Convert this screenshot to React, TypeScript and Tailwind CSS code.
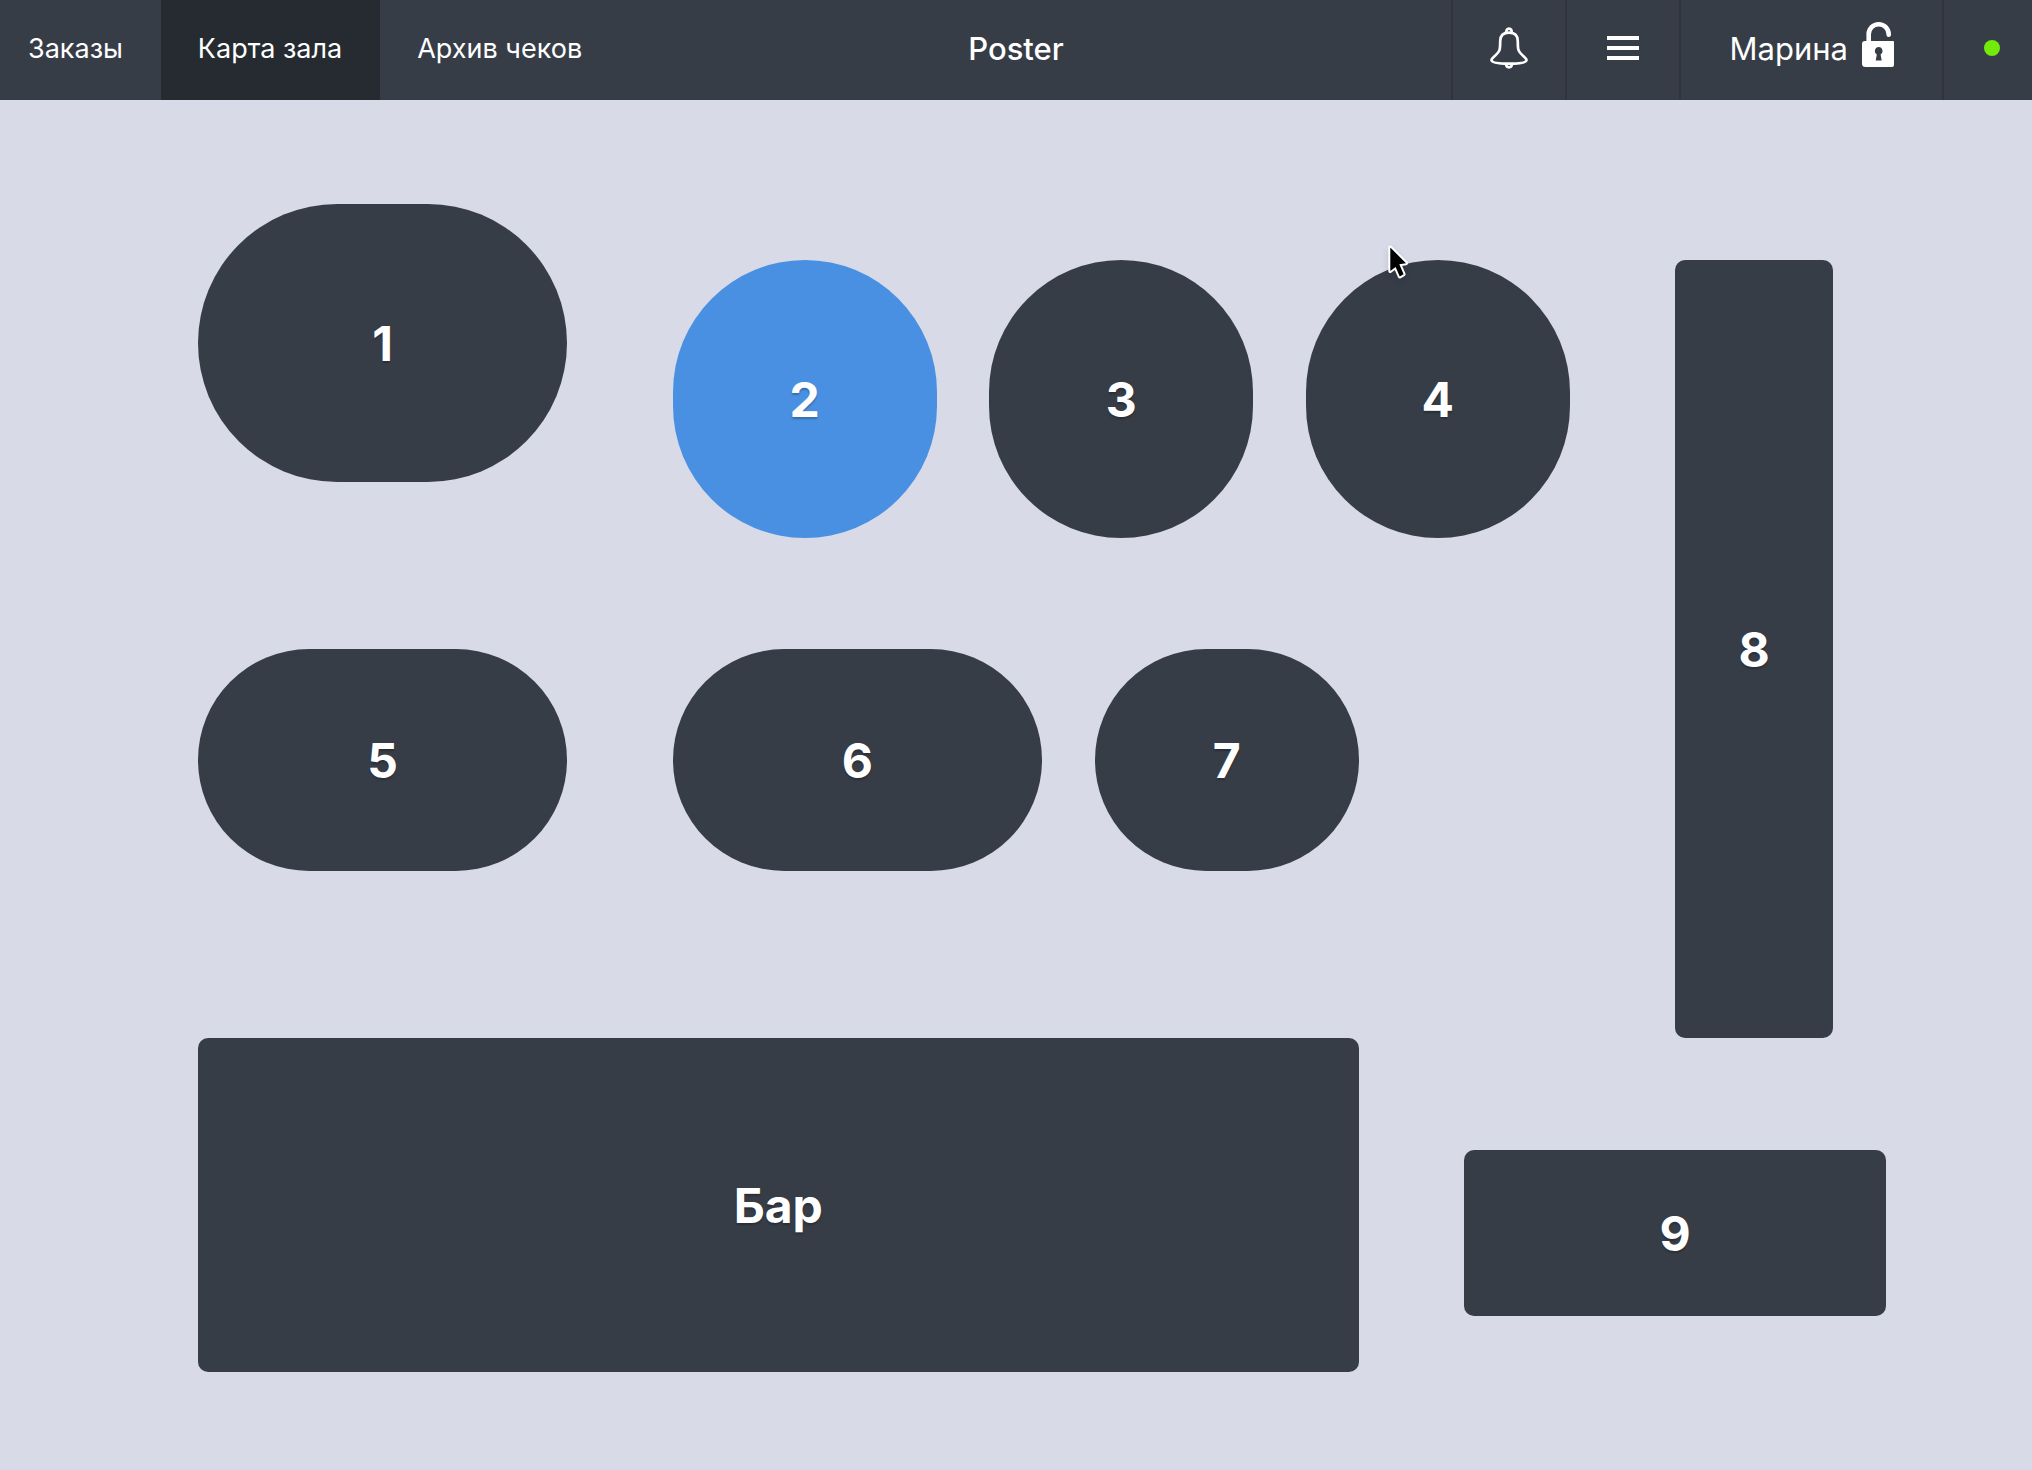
import { useState } from "react";
import clsx from "clsx";

type HallTable = {
  name: string;
  round?: boolean;
  area: string;
};

const tabs = ["Заказы", "Карта зала", "Архив чеков"];

const tables: HallTable[] = [
  { name: "1", round: true, area: "col-start-1 col-span-7 row-start-1 row-span-5" },
  { name: "2", round: true, area: "col-start-10 col-span-5 row-start-2 row-span-5" },
  { name: "3", round: true, area: "col-start-16 col-span-5 row-start-2 row-span-5" },
  { name: "4", round: true, area: "col-start-22 col-span-5 row-start-2 row-span-5" },
  { name: "5", round: true, area: "col-start-1 col-span-7 row-start-9 row-span-4" },
  { name: "6", round: true, area: "col-start-10 col-span-7 row-start-9 row-span-4" },
  { name: "7", round: true, area: "col-start-18 col-span-5 row-start-9 row-span-4" },
  { name: "8", area: "col-start-29 col-span-3 row-start-2 row-span-14" },
  { name: "Бар", area: "col-start-1 col-span-22 row-start-16 row-span-6" },
  { name: "9", area: "col-start-25 col-span-8 row-start-18 row-span-3" },
];

function BellIcon() {
  return (
    <svg width="38" height="42" viewBox="0 0 38 42" fill="none" stroke="currentColor" strokeWidth="2.7" aria-hidden="true">
      <path d="M16.4 5.4C16 3.2 17 1.6 19 1.6S22 3.2 21.6 5.4" />
      <path d="M19 5.6C13 5.6 10.2 8.6 10.2 14.2C10.2 24 9.6 24.4 5.2 28.6C3 30.5 1.5 31.6 1.5 33C1.5 35.6 9 36.7 19 36.7S36.5 35.6 36.5 33C36.5 31.6 35 30.5 32.8 28.6C28.4 24.4 27.8 24 27.8 14.2C27.8 8.6 25 5.6 19 5.6Z" />
      <path d="M16 37C16.2 39.4 17.2 40.4 19 40.4S21.8 39.4 22 37" />
    </svg>
  );
}

function MenuIcon() {
  return (
    <svg width="32" height="24" viewBox="0 0 32 24" fill="currentColor" aria-hidden="true">
      <path d="M0 0H32V4H0ZM0 10H32V14H0ZM0 20H32V24H0Z" />
    </svg>
  );
}

function UnlockIcon() {
  return (
    <svg width="32" height="45" viewBox="0 0 32 45" aria-hidden="true">
      <path d="M6.7 21V12.3A10 10 0 0 1 26.7 12.3V12.8" fill="none" stroke="currentColor" strokeWidth="4.6" strokeLinecap="round" />
      <path d="M3 19H31Q32 19 32 20V43Q32 45 30 45H3.5Q0 45 0 41.5V22Q0 19 3 19Z" fill="currentColor" />
      <path d="M16.7 25A4 4 0 0 1 18.6 32.4L19.7 38.4H13.7L14.8 32.4A4 4 0 0 1 16.7 25Z" fill="#373d47" />
    </svg>
  );
}

function Cursor() {
  return (
    <svg
      className="pointer-events-none absolute left-[1387px] top-[144px] drop-shadow-md"
      width="24"
      height="38"
      viewBox="0 0 24 38"
      aria-hidden="true"
    >
      <path
        d="M3.3 3.6L19 19.2L12.3 20.2L16.6 30.2L12.8 32.4L8.6 23L3.3 27Z"
        fill="#000"
        stroke="#fff"
        strokeWidth="4"
        strokeLinejoin="round"
        paintOrder="stroke"
      />
    </svg>
  );
}

export default function App() {
  const [tab, setTab] = useState("Карта зала");
  const [selected, setSelected] = useState("2");

  return (
    <div className="flex min-h-screen flex-col bg-[#d8dae7] font-['Inter',sans-serif] text-white">
      <header className="grid h-[100px] grid-cols-[1fr_auto_1fr] bg-[#373d47]">
        <nav className="flex">
          {tabs.map((name) => (
            <button
              key={name}
              type="button"
              onClick={() => setTab(name)}
              className={clsx(
                "whitespace-nowrap pr-[38px] pb-0.5 pl-[37px] text-[27px] leading-9 first:pl-7",
                tab === name && "bg-[#252b31]",
              )}
            >
              {name}
            </button>
          ))}
        </nav>
        <h1 className="flex items-center pb-0.5 text-[31px] leading-9 font-medium">Poster</h1>
        <div className="flex justify-end">
          <button type="button" aria-label="Уведомления" className="flex w-[114px] items-center justify-center border-l-2 border-[#2f353b] pb-1">
            <BellIcon />
          </button>
          <button type="button" aria-label="Меню" className="flex w-[114px] items-center justify-center border-l-2 border-[#2f353b] pb-1">
            <MenuIcon />
          </button>
          <button type="button" className="flex items-center border-l-2 border-[#2f353b] pr-12 pb-3 pl-[49px]">
            <span className="flex items-end gap-3.5">
              <span className="text-[31px] leading-9">Марина</span>
              <UnlockIcon />
            </span>
          </button>
          <div className="flex items-center border-l-2 border-[#2f353b] pr-8 pb-1 pl-10">
            <span role="status" aria-label="В сети" className="size-4 rounded-full bg-[#72eb0c]" />
          </div>
        </div>
      </header>

      <main className="relative grid flex-1 grid-cols-[repeat(32,minmax(0,1fr))] grid-rows-[repeat(21,minmax(0,1fr))] pt-[104px] pr-[146px] pb-[98px] pl-[198px]">
        {tables.map((table) => (
          <button
            key={table.name}
            type="button"
            aria-pressed={selected === table.name}
            onClick={() => setSelected(table.name)}
            className={clsx(
              "pt-0.5 text-5xl font-bold [text-shadow:0_2px_2px_rgba(0,0,0,0.25)]",
              table.area,
              table.round ? "rounded-full" : "rounded-[10px]",
              selected === table.name ? "bg-[#4990e2]" : "bg-[#373d47]",
            )}
          >
            {table.name}
          </button>
        ))}
        <Cursor />
      </main>
    </div>
  );
}
